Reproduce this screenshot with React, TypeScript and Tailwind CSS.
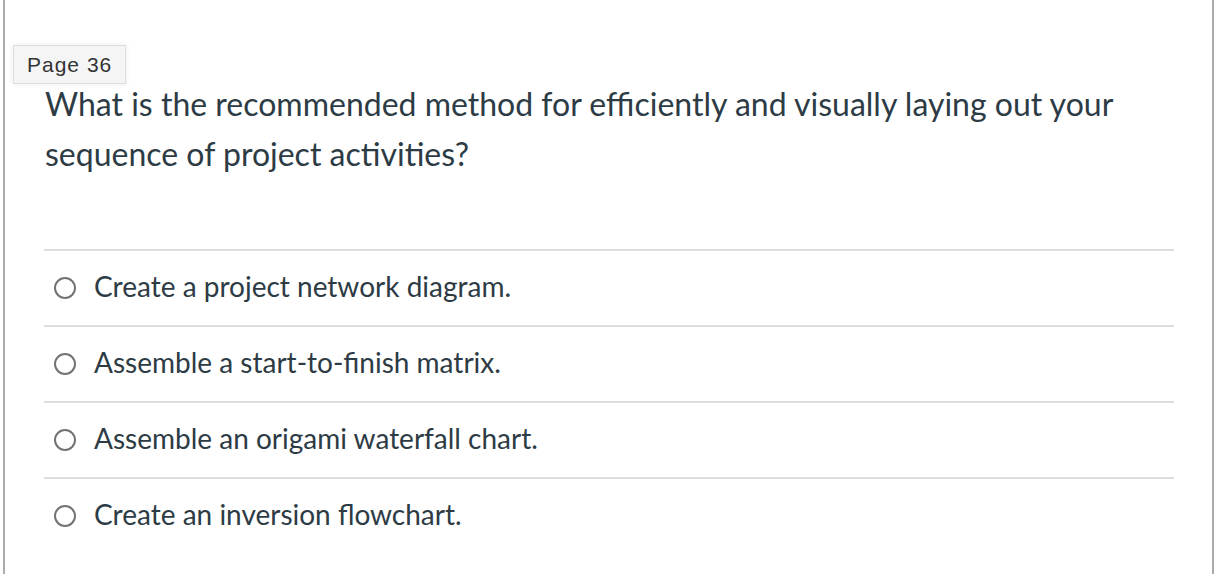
import React from "react";

const options = [
  "Create a project network diagram.",
  "Assemble a start-to-finish matrix.",
  "Assemble an origami waterfall chart.",
  "Create an inversion flowchart.",
];

export default function App() {
  return (
    <div className="w-[1222px] h-[574px] bg-white overflow-hidden">
      <div className="ml-[3px] w-[1211px] h-[574px] border-l-2 border-r-2 border-[#ababab] pt-[45px]">
        <div className="ml-[8px] inline-flex items-center h-[39px] px-[13px] bg-[#f5f5f5] border border-[#dedede] shadow-[0_0_6px_rgba(0,0,0,0.08)] text-[21px] text-[#333] font-['Liberation_Sans',sans-serif] tracking-[1px]">
          Page 36
        </div>
        <div className="ml-[40px] mr-[38px] mt-[-5px] text-[32px] leading-[50px] text-[#2d3b45] font-['Lato',sans-serif]">
          What is the recommended method for efficiently and visually laying out your sequence of project activities?
        </div>
        <div className="ml-[39px] mr-[38px] mt-[70px] font-['Lato',sans-serif]">
          {options.map((o) => (
            <div key={o} className="border-t-2 border-[#dddddd] h-[76px] flex items-center">
              <span className="ml-[10px] w-[22px] h-[22px] rounded-full border-2 border-[#737373] shrink-0" />
              <span className="ml-[18px] mb-[5px] text-[28px] leading-[34px] text-[#2d3b45]">{o}</span>
            </div>
          ))}
        </div>
      </div>
    </div>
  );
}
